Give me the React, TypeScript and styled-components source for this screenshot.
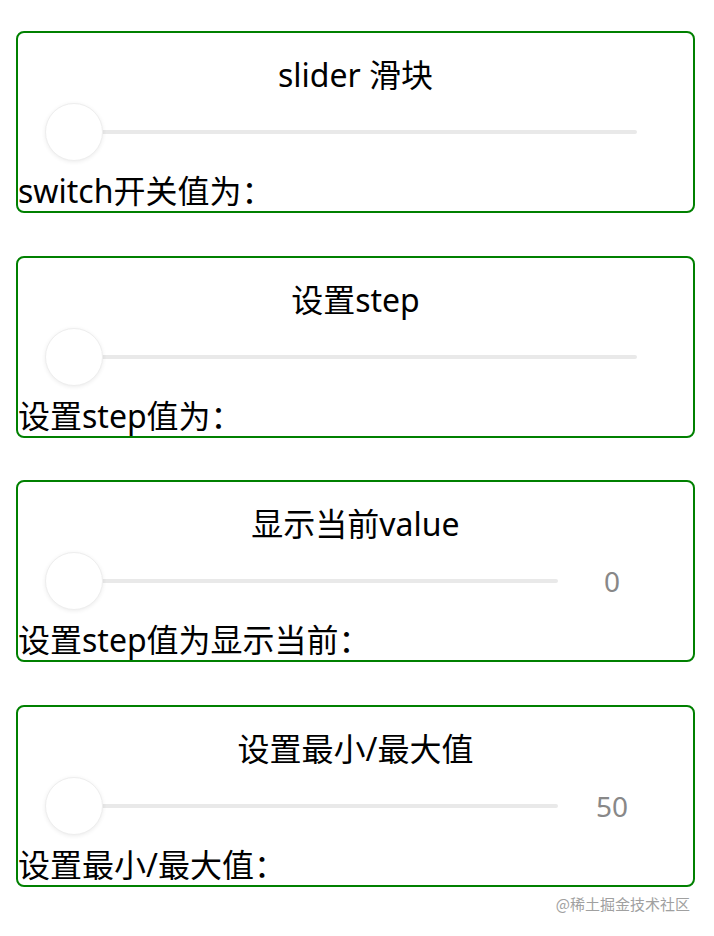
import React from 'react';
import styled, { createGlobalStyle } from 'styled-components';

const GlobalStyle = createGlobalStyle`
  html, body {
    margin: 0;
    padding: 0;
    background: #fff;
  }
  body {
    font-family: "Noto Sans", "Noto Sans CJK SC", sans-serif;
    color: #000;
  }
`;

const Page = styled.div`
  display: flex;
  flex-direction: column;
  gap: 42.5px;
  padding: 31px 19px 0 16px;
`;

const Card = styled.div`
  box-sizing: border-box;
  height: 182px;
  border: 2px solid green;
  border-radius: 8px;
  display: flex;
  flex-direction: column;
`;

const Title = styled.div`
  margin-top: 22px;
  font-size: 32px;
  line-height: 40px;
  text-align: center;
`;

const SliderRow = styled.div`
  display: flex;
  align-items: center;
  height: 58px;
  margin-top: 8px;
  padding-left: 27px;
  padding-right: 56px;
`;

const Rail = styled.div<{ $withValue?: boolean }>`
  position: relative;
  flex: ${p => (p.$withValue ? '0 0 513px' : '1')};
  height: 58px;
  display: flex;
  align-items: center;
`;

const Track = styled.div`
  width: 100%;
  height: 4px;
  background: #e9e9e9;
  border-radius: 2px;
`;

const Thumb = styled.div`
  position: absolute;
  left: 0;
  top: 0;
  width: 58px;
  height: 58px;
  box-sizing: border-box;
  border-radius: 50%;
  background: #fff;
  border: 1px solid #eeeeee;
  box-shadow: 0 1px 4px rgba(0, 0, 0, 0.08);
`;

const Value = styled.div`
  width: 40px;
  margin-left: 34px;
  text-align: center;
  font-size: 28px;
  color: #888;
`;

const Footer = styled.div`
  margin-top: 11px;
  font-size: 32px;
  line-height: 38px;
  white-space: nowrap;
`;

const Watermark = styled.div`
  text-align: right;
  padding-right: 24px;
  margin-top: 6px;
  font-size: 15px;
  color: #a0a0a0;
  font-family: "Noto Sans CJK SC", sans-serif;
`;

interface SliderCardProps {
  title: string;
  label: string;
  value?: number;
}

const SliderCard: React.FC<SliderCardProps> = ({ title, label, value }) => {
  const hasValue = value !== undefined;
  return (
    <Card>
      <Title>{title}</Title>
      <SliderRow>
        <Rail $withValue={hasValue}>
          <Track />
          <Thumb />
        </Rail>
        {hasValue && <Value>{value}</Value>}
      </SliderRow>
      <Footer>{label}</Footer>
    </Card>
  );
};

const App: React.FC = () => {
  return (
    <>
      <GlobalStyle />
      <Page>
        <SliderCard title="slider 滑块" label="switch开关值为：" />
        <SliderCard title="设置step" label="设置step值为：" />
        <SliderCard title="显示当前value" label="设置step值为显示当前：" value={0} />
        <SliderCard title="设置最小/最大值" label="设置最小/最大值：" value={50} />
      </Page>
      <Watermark>@稀土掘金技术社区</Watermark>
    </>
  );
};

export default App;
